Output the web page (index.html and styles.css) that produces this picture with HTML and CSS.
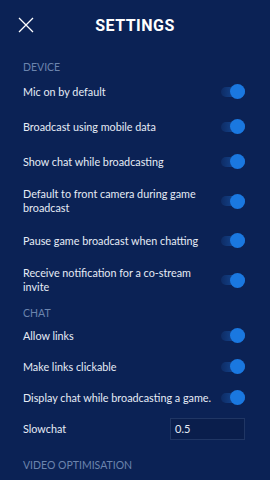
FILE: index.html
```html
<!DOCTYPE html>
<html lang="en">
<head>
    <meta charset="UTF-8">
    <meta name="viewport" content="width=device-width, initial-scale=1.0">
    <title>Settings</title>
    <link rel="stylesheet" href="styles.css">
</head>
<body>
    <div class="screen">
        <div class="topbar">
            <svg class="close" width="16" height="16" viewBox="0 0 16 16">
                <path d="M1 1 L15 15 M15 1 L1 15" stroke="#ffffff" stroke-width="1.3" fill="none"/>
            </svg>
            <h1 class="title">SETTINGS</h1>
        </div>

        <!-- device -->
        <div class="section-label">DEVICE</div>
        <div class="row">
            <span class="label">Mic on by default</span>
            <span class="toggle"></span>
        </div>
        <div class="row">
            <span class="label">Broadcast using mobile data</span>
            <span class="toggle"></span>
        </div>
        <div class="row">
            <span class="label">Show chat while broadcasting</span>
            <span class="toggle"></span>
        </div>
        <div class="row">
            <span class="label">Default to front camera during game broadcast</span>
            <span class="toggle"></span>
        </div>
        <div class="row">
            <span class="label">Pause game broadcast when chatting</span>
            <span class="toggle"></span>
        </div>
        <div class="row">
            <span class="label">Receive notification for a co-stream invite</span>
            <span class="toggle"></span>
        </div>

        <!-- chat -->
        <div class="section-label chat-label">CHAT</div>
        <div class="row compact">
            <span class="label">Allow links</span>
            <span class="toggle"></span>
        </div>
        <div class="row compact">
            <span class="label">Make links clickable</span>
            <span class="toggle"></span>
        </div>
        <div class="row compact">
            <span class="label">Display chat while broadcasting a game.</span>
            <span class="toggle"></span>
        </div>
        <div class="row compact input-row">
            <span class="label">Slowchat</span>
            <span class="field">0.5</span>
        </div>

        <div class="section-label video-label">VIDEO OPTIMISATION</div>
    </div>
</body>
</html>
```

FILE: styles.css
```css
* {
    margin: 0;
    padding: 0;
    box-sizing: border-box;
}

body {
    background: #0b2255;
    font-family: 'Lato', 'Open Sans', sans-serif;
    color: #e6ecf6;
    width: 270px;
    height: 480px;
    overflow: hidden;
}

.screen {
    padding: 0 25px 0 23px;
}

.topbar {
    height: 50px;
    display: flex;
    align-items: center;
    position: relative;
}

.close {
    margin-left: -5px;
}

.title {
    position: absolute;
    left: -23px;
    right: -25px;
    top: 17px;
    text-align: center;
    font-family: 'Roboto', sans-serif;
    font-size: 16px;
    font-weight: 700;
    letter-spacing: 0.5px;
    color: #ffffff;
    line-height: 18px;
}

.section-label {
    padding-top: 10px;
    font-size: 10.5px;
    line-height: 14px;
    color: #6b84ad;
}

.chat-label {
    padding-top: 4px;
}

.video-label {
    padding-top: 14px;
}

.row {
    display: flex;
    align-items: center;
    gap: 7px;
    min-height: 35px;
    padding: 8px 0;
}

.row.compact {
    min-height: 31px;
}

.row.input-row {
    padding: 4px 0;
}

.label {
    flex: 1;
    font-size: 10.8px;
    line-height: 14px;
}

.toggle {
    position: relative;
    width: 24px;
    height: 10px;
    border-radius: 5px;
    background: linear-gradient(90deg, rgba(30, 100, 190, 0.15), rgba(30, 110, 210, 0.7));
    flex-shrink: 0;
}

.toggle::after {
    content: '';
    position: absolute;
    right: 0;
    top: -2.5px;
    width: 15px;
    height: 15px;
    border-radius: 50%;
    background: #1a78e0;
}

.field {
    width: 75px;
    height: 22px;
    border: 1px solid rgba(120, 150, 200, 0.2);
    background: #0a1e4c;
    font-size: 11px;
    line-height: 20px;
    padding-left: 4px;
    color: #e6ecf6;
}
```
